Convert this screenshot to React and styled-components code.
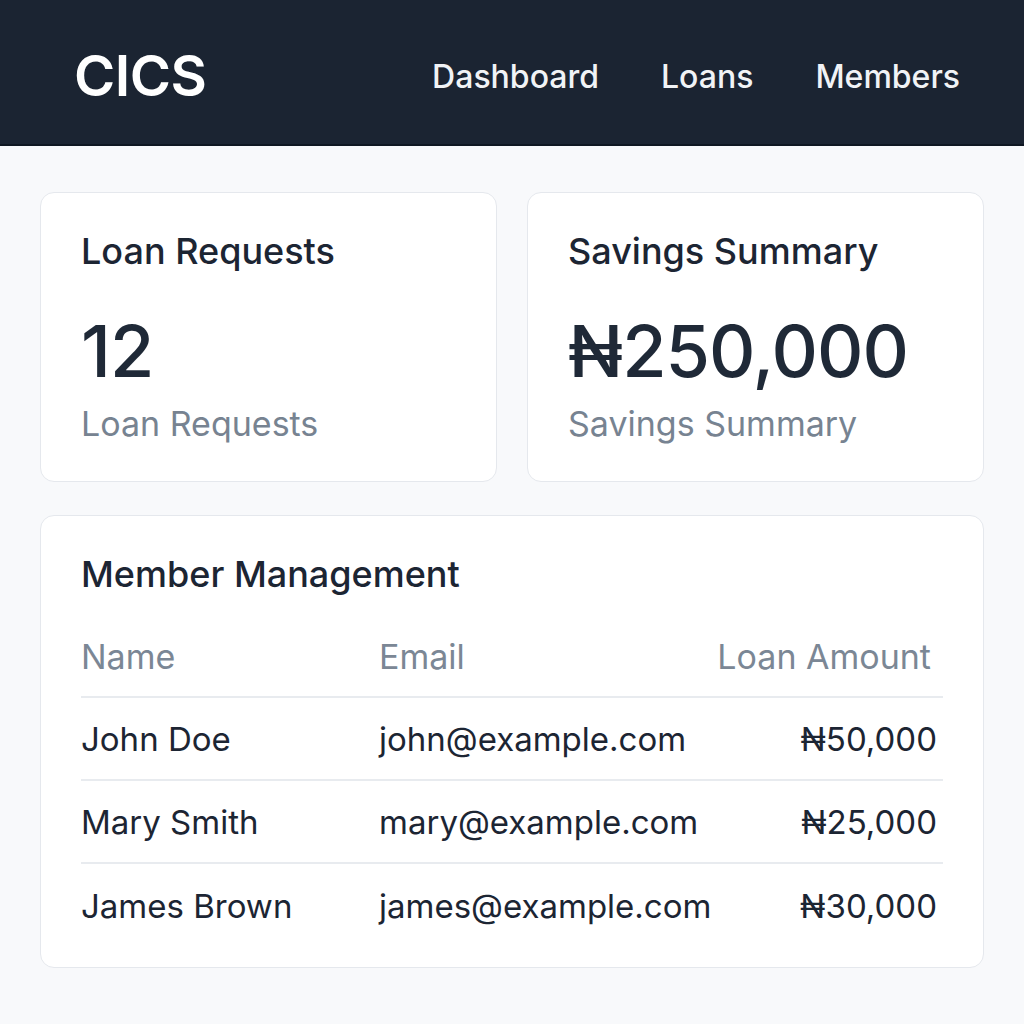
import React from 'react';
import styled, { createGlobalStyle } from 'styled-components';

const GlobalStyle = createGlobalStyle`
  * { box-sizing: border-box; }
  body {
    margin: 0;
    background: #f8f9fb;
    font-family: Inter, "Noto Sans", "Liberation Sans", sans-serif;
    color: #1c2533;
  }
`;

const Header = styled.header`
  height: 146px;
  background: #1b2432;
  border-bottom: 2px solid #0f1722;
  display: flex;
  align-items: center;
  justify-content: space-between;
  padding: 8px 64px 0 74px;
`;

const Logo = styled.div`
  color: #fff;
  font-size: 56px;
  font-weight: 600;
  letter-spacing: -0.5px;
`;

const Nav = styled.nav`
  display: flex;
  gap: 62px;
`;

const NavLink = styled.a`
  color: #f1f3f6;
  font-size: 32px;
  font-weight: 500;
  text-decoration: none;
`;

const Main = styled.main`
  padding: 46px 40px 56px;
  display: flex;
  flex-direction: column;
  gap: 33px;
`;

const CardRow = styled.div`
  display: grid;
  grid-template-columns: 1fr 1fr;
  gap: 30px;
`;

const Card = styled.section`
  background: #fff;
  border: 1px solid #e5e8ed;
  border-radius: 14px;
  padding: ${(p) => p.$pad || '37px 40px 36px'};
`;

const CardTitle = styled.h2`
  margin: 0;
  font-size: 36px;
  font-weight: 500;
  color: #1c2533;
  line-height: 1.2;
`;

const StatValue = styled.div`
  font-size: 72px;
  font-weight: 500;
  color: #1f2937;
  line-height: 1;
  margin-top: 42px;
  letter-spacing: -1px;
`;

const StatLabel = styled.div`
  font-size: 34px;
  color: #778391;
  margin-top: 17px;
  line-height: 1.2;
`;

const Table = styled.div`
  margin-top: 20px;
`;

const TableRow = styled.div`
  display: grid;
  grid-template-columns: 298px 1fr auto;
  align-items: center;
  height: ${(p) => (p.$head ? '82px' : '83px')};
  border-bottom: ${(p) => (p.$last ? 'none' : '2px solid #e8ebef')};
  padding-right: ${(p) => (p.$head ? '12px' : '6px')};
  font-size: ${(p) => (p.$head ? '34px' : '33px')};
  color: ${(p) => (p.$head ? '#7b8795' : '#1c2533')};
`;

const Amount = styled.span`
  text-align: right;
`;

const members = [
  { name: 'John Doe', email: 'john@example.com', amount: '₦50,000' },
  { name: 'Mary Smith', email: 'mary@example.com', amount: '₦25,000' },
  { name: 'James Brown', email: 'james@example.com', amount: '₦30,000' },
];

export default function App() {
  return (
    <>
      <GlobalStyle />
      <Header>
        <Logo>CICS</Logo>
        <Nav>
          <NavLink>Dashboard</NavLink>
          <NavLink>Loans</NavLink>
          <NavLink>Members</NavLink>
        </Nav>
      </Header>
      <Main>
        <CardRow>
          <Card>
            <CardTitle>Loan Requests</CardTitle>
            <StatValue>12</StatValue>
            <StatLabel>Loan Requests</StatLabel>
          </Card>
          <Card>
            <CardTitle>Savings Summary</CardTitle>
            <StatValue>₦250,000</StatValue>
            <StatLabel>Savings Summary</StatLabel>
          </Card>
        </CardRow>
        <Card $pad="37px 40px 20px">
          <CardTitle>Member Management</CardTitle>
          <Table>
            <TableRow $head>
              <span>Name</span>
              <span>Email</span>
              <Amount>Loan Amount</Amount>
            </TableRow>
            {members.map((m, i) => (
              <TableRow key={m.email} $last={i === members.length - 1}>
                <span>{m.name}</span>
                <span>{m.email}</span>
                <Amount>{m.amount}</Amount>
              </TableRow>
            ))}
          </Table>
        </Card>
      </Main>
    </>
  );
}
